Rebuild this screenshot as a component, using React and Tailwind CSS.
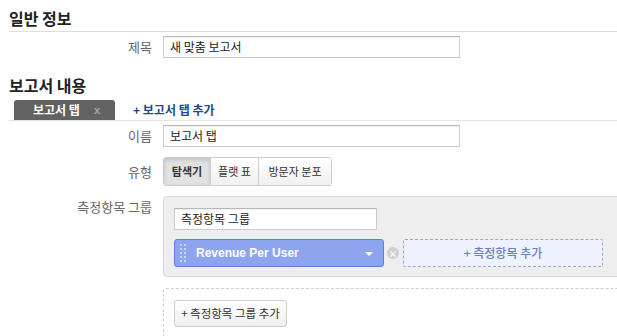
import React from "react";

const font = { fontFamily: '"Noto Sans CJK KR", "Liberation Sans", sans-serif' };

function Label({ children, className = "" }) {
  return (
    <div className={`w-[153px] shrink-0 text-right text-[13px] text-[#666] pr-[1px] ${className}`}>
      {children}
    </div>
  );
}

function TextInput({ value, w = "w-[297px]" }) {
  return (
    <div
      className={`${w} h-[22px] border border-[#ccc] border-t-[#b8b8b8] bg-white flex items-center px-[6px] text-[12px] text-[#222] shadow-[inset_0_1px_1px_rgba(0,0,0,0.06)]`}
    >
      {value}
    </div>
  );
}

export default function App() {
  return (
    <div className="w-[617px] h-[336px] overflow-hidden bg-white relative" style={font}>
      {/* 일반 정보 */}
      <div className="pl-[9px] pt-[8px]">
        <div className="text-[16px] font-bold text-[#222] leading-[20px] pb-[3px] border-b border-[#ddd]">
          일반 정보
        </div>
      </div>
      <div className="flex items-center gap-[10px] mt-[4px]">
        <Label>제목</Label>
        <TextInput value="새 맞춤 보고서" />
      </div>

      {/* 보고서 내용 */}
      <div className="pl-[9px] mt-[17px] text-[16px] font-bold text-[#222] leading-[20px]">
        보고서 내용
      </div>
      <div className="ml-[9px] mt-[5px] flex items-end border-b border-[#e3e3e3]">
        <div className="ml-[5px] w-[101px] h-[20px] bg-[#626262] rounded-t-[3px] flex items-center pl-[19px] text-[12px] font-bold text-white">
          <span>보고서 탭</span>
          <span className="ml-[14px] text-[11px] text-[#a8a8a8] font-bold" style={{ fontFamily: '"Liberation Sans", Arial, sans-serif' }}>x</span>
        </div>
        <div className="ml-[18px] h-[20px] flex items-center text-[12px] font-bold text-[#23498c]">
          + 보고서 탭 추가
        </div>
      </div>

      <div className="flex items-center gap-[10px] mt-[4px]">
        <Label>이름</Label>
        <TextInput value="보고서 탭" />
      </div>

      <div className="flex items-center gap-[10px] mt-[10px]">
        <Label>유형</Label>
        <div className="flex h-[29px] border border-[#ccc] rounded-[3px] overflow-hidden text-[11px] text-[#333]">
          <div className="w-[47px] flex items-center justify-center bg-[#e2e2e2] font-bold shadow-[inset_0_2px_4px_rgba(0,0,0,0.15)] border-r border-[#ccc]">
            탐색기
          </div>
          <div className="w-[48px] flex items-center justify-center bg-gradient-to-b from-white to-[#f0f0f0] border-r border-[#ccc]">
            플랫 표
          </div>
          <div className="w-[72px] flex items-center justify-center bg-gradient-to-b from-white to-[#f0f0f0]">
            방문자 분포
          </div>
        </div>
      </div>

      <div className="flex items-start gap-[10px] mt-[10px]">
        <Label className="pt-[1px]">측정항목 그룹</Label>
        <div className="w-[470px] shrink-0">
          <div className="bg-[#eeeeee] border border-[#d8d8d8] rounded-[4px] pl-[10px] pt-[11px] pb-[9px]">
            <TextInput value="측정항목 그룹" w="w-[203px]" />
            <div className="flex items-center mt-[9px]">
              <div className="w-[210px] h-[28px] bg-[#8da5ef] border border-[#5f7fd8] rounded-[3px] flex items-center relative">
                <div className="ml-[5px] grid grid-cols-2 gap-x-[2px] gap-y-[2px]">
                  {Array.from({ length: 10 }).map((_, i) => (
                    <div key={i} className="w-[2px] h-[2px] bg-[#c9d5fa]" />
                  ))}
                </div>
                <span
                  className="ml-[10px] text-[12px] font-bold text-white"
                  style={{ fontFamily: '"Liberation Sans", Arial, sans-serif' }}
                >
                  Revenue Per User
                </span>
                <div className="absolute right-[10px] top-[12px] w-0 h-0 border-l-[4px] border-r-[4px] border-t-[4px] border-l-transparent border-r-transparent border-t-white" />
              </div>
              <div className="ml-[3px] w-[12px] h-[12px] rounded-full bg-[#cfcfcf] flex items-center justify-center text-[9px] leading-none text-white font-bold">
                ×
              </div>
              <div className="ml-[4px] w-[200px] h-[28px] bg-[#eef2fe] border border-dashed border-[#98a8cf] rounded-[2px] flex items-center justify-center text-[12px] font-medium text-[#6a80b8]">
                + 측정항목 추가
              </div>
            </div>
          </div>

          <div className="mt-[11px] border border-dashed border-[#cfcfcf] rounded-[3px] pl-[10px] pt-[11px] h-[70px]">
            <div className="w-[113px] h-[27px] border border-[#ccc] rounded-[3px] bg-gradient-to-b from-white to-[#efefef] flex items-center justify-center text-[11.5px] text-[#333]">
              + 측정항목 그룹 추가
            </div>
          </div>
        </div>
      </div>
    </div>
  );
}
